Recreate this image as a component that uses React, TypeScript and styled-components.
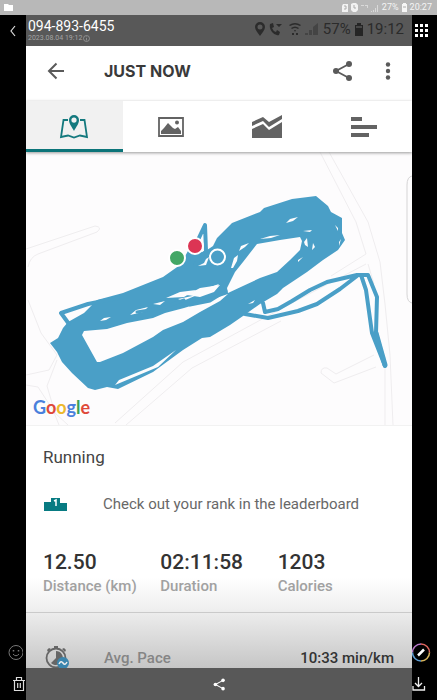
import React from "react";
import styled, { createGlobalStyle } from "styled-components";

const Global = createGlobalStyle`
  * { box-sizing: border-box; }
  body { margin: 0; background: #000; font-family: Roboto, "Liberation Sans", sans-serif; }
  button { font: inherit; color: inherit; }
  svg { display: block; flex: none; }
`;

const Page = styled.div`
  height: 100vh;
  display: flex;
  flex-direction: column;
  overflow: hidden;
  background: #000;
`;

const DeviceBar = styled.header`
  height: 15px;
  flex: none;
  display: flex;
  align-items: center;
  justify-content: space-between;
  padding: 0 5px 0 4px;
  background: #b8b8b8;
  color: #f4f4f4;
  font-size: 9px;
  line-height: 15px;
`;

const DeviceStatus = styled.div`
  display: flex;
  align-items: center;
  gap: 3px;
`;

const Viewer = styled.div`
  flex: 1;
  min-height: 0;
  display: grid;
  grid-template-columns: 26px minmax(0, 1fr) 25px;
`;

const Rail = styled.div<{ $align: string }>`
  display: flex;
  flex-direction: column;
  align-items: ${(p) => p.$align};
  padding: 9px 0 8px;
  color: #ddd;
`;

const IconButton = styled.button<{ $gap?: number }>`
  display: flex;
  flex: none;
  padding: 0;
  border: 0;
  background: none;
  margin-top: ${(p) => p.$gap ?? 0}px;
`;

const TrashButton = styled(IconButton)`
  align-self: flex-end;
`;

const Spacer = styled.div`
  flex: 1;
`;

const Photo = styled.main`
  display: flex;
  flex-direction: column;
  min-height: 0;
  background: #fff;
`;

const PhotoHeader = styled.div`
  height: 31px;
  flex: none;
  display: flex;
  justify-content: space-between;
  padding: 3px 8px 0 2px;
  background: #585858;
`;

const PhotoTitle = styled.div`
  color: #fff;
  font-size: 14px;
  line-height: 16px;
`;

const PhotoDate = styled.div`
  display: flex;
  align-items: center;
  gap: 1px;
  color: #a4a4a4;
  font-size: 7px;
  line-height: 9px;
`;

const PhoneStatus = styled.div`
  height: 22px;
  display: flex;
  align-items: center;
  gap: 4px;
  color: #2b2b2b;
  font-size: 15px;
`;

const PhotoFooter = styled.div`
  height: 32px;
  flex: none;
  display: flex;
  align-items: center;
  justify-content: center;
  background: #585858;
  color: #fff;
`;

const AppScreen = styled.div`
  flex: 1;
  min-height: 0;
  overflow: hidden;
  display: flex;
  flex-direction: column;
  background: #fff;
`;

const AppBar = styled.div`
  height: 55px;
  flex: none;
  display: flex;
  align-items: center;
  padding: 0 21px 6px 21px;
  color: #5a5a5a;
`;

const AppTitle = styled.h1`
  flex: 1;
  margin: 0 0 0 38px;
  font: 700 16px/24px Inter, Roboto, sans-serif;
  color: #3a3a3a;
`;

const BarActions = styled.div`
  display: flex;
  align-items: center;
  gap: 31px;
`;

const Tabs = styled.nav`
  display: grid;
  grid-template-columns: repeat(4, 1fr);
  flex: none;
  height: 51px;
  position: relative;
  z-index: 1;
  box-shadow: 0 1px 3px #999;
`;

const Tab = styled.button<{ $active?: boolean }>`
  display: flex;
  align-items: center;
  justify-content: center;
  padding: 3px 0 0;
  border: 0;
  border-bottom: 3px solid ${(p) => (p.$active ? "#0b7479" : "#fff")};
  background: ${(p) => (p.$active ? "#f1f1f1" : "#fff")};
  color: ${(p) => (p.$active ? "#14797e" : "#636363")};
`;

const MapSvg = styled.svg`
  width: 100%;
  height: auto;
  background: #fdfcfd;
`;

const MapArea = styled.section`
  position: relative;
  flex: none;
  border-bottom: 1px solid #f2f2f2;
`;

const Google = styled.div`
  position: absolute;
  left: 7px;
  bottom: 6px;
  font: 700 18px/24px Lato, sans-serif;
  color: #4a80dc;
`;

const Letter = styled.span<{ $color: string }>`
  color: ${(p) => p.$color};
`;

const Details = styled.section`
  flex: 1 0 auto;
  padding: 18px 17px 0;
  background: linear-gradient(#fff 0 152px, #efefef 183px, #c3c3c3 246px);
`;

const Sport = styled.h2`
  margin: 0;
  font-weight: 400;
  font-size: 17px;
  line-height: 26px;
  color: #444;
`;

const RankLink = styled.a`
  display: flex;
  align-items: center;
  height: 24px;
  margin-top: 22px;
  gap: 36px;
  padding-left: 1px;
  font-size: 15px;
  color: #686868;
  text-decoration: none;
  white-space: nowrap;
`;

const Stats = styled.dl`
  display: grid;
  grid-template-columns: repeat(3, 1fr);
  margin: 32px 0 0;
`;

const Stat = styled.div`
  display: flex;
  flex-direction: column-reverse;
  justify-content: flex-end;
`;

const Value = styled.dd`
  margin: 0;
  font-weight: 500;
  font-size: 21px;
  line-height: 28px;
  color: #333;
`;

const Label = styled.dt`
  font-weight: 500;
  font-size: 15px;
  line-height: 20px;
  color: #a1a1a1;
  white-space: nowrap;
`;

const PaceRow = styled.div`
  display: flex;
  align-items: center;
  height: 56px;
  margin: 16px -17px 0;
  padding: 34px 18px 0 19px;
  border-top: 1px solid #cacaca;
  font-weight: 500;
  font-size: 15px;
  color: #333;
`;

const PaceName = styled.span`
  flex: 1;
  margin-left: 33px;
  color: #858585;
`;

const Share = ({ size }: { size: number }) => (
  <svg width={size} height={size} viewBox="0 0 22 22" fill="currentColor">
    <path d="M17 4 4 11l13 7" fill="none" stroke="currentColor" strokeWidth="1.8" />
    <circle cx="17" cy="4" r="3" /><circle cx="4" cy="11" r="3" /><circle cx="17" cy="18" r="3" />
  </svg>
);

const RouteMap = () => (
  <MapSvg viewBox="26 152 386 273" role="img" aria-label="Running route">
    <g fill="none" stroke="#efedef" strokeWidth="1">
      <path d="M26 249 95 226q8 1 2 6L38 254q-8 3-10 13M320 152l36 70 10 32-35 22M329 152l39 70 12 40 5 42 5 51 3 70M385 357v68M366 264l-76 40-107 58-68 61M368 264l6 20M281 321l-89 47-66 57" />
      <path d="M374 355l-38 19-9-6q-6-1-6 5l13 10 42-16M28 300l13 33 16 22-8 15-23 5M26 385l12 2 15 23 6 15M57 360l-10 26 8 27 13 12" />
      <path stroke="#d5d4d5" d="M412 176q-5 1-5 9v109q0 8 5 9" />
    </g>
    <path
      fill="#4a9fc7"
      d="M50 343 L58 338 L63 328 L68 322 L84 313 L97 300 L123 293 L143 285 L163 277 L180 265 L188 251 L204 252 L213 246 L217 238 L232 223 L260 212 L264 208 L292 199 L316 196 L328 206 L331 212 L342 218 L342 233 L345 240 L338 250 L323 260 L307 272 L283 288 L277 294 L260 304 L243 316 L230 325 L210 337 L202 338 L183 350 L153 372 L118 389 L107 387 L95 390 L88 388 L72 373 L62 362 L57 352Z"
    />
    <g fill="#fdfcfd">
      <path d="M82 335 L84 331 L107 329 L127 323 L153 318 L165 313 L184 308 L197 304 L216 298 L228 294 L220 301 L200 312 L183 322 L163 330 L153 337 L123 353 L100 362 L97 362Z" />
      <path d="M257 244 L280 240 L300 237 L302 241 L300 250 L290 260 L277 272 L260 278 L243 286 L228 293 L227 288 L235 272 L243 262Z" />
      <path d="M166 298l14-6 16-2-12 7zM187 295l13-7 20-3-6 7-14 5zM130 315l6-5 12-3-5 5zM153 304l12-3-5 4zM178 299l19-4-14 6zM100 321l4-3 7-1-5 3zM115 385l4-5 34-14 23-16-18 17z" />
      <path d="M198 266l6-3 2-4 3-2-3 8zM210 287l9-3-4 5-6 3zM239 251l2-5 8-3-4 4zM231 268l3-10 4-3-1 6-4 7zM260 239l10-3 10-1-9 3zM286 223l4-4 8-2-5 4zM303 231l9-1-2 2zM335 225l3 3v3zM304 242l3-4 1 9-3-2zM313 243l2 4-3 3zM339 242l2-3-2 7zM298 260l5-3-5 5zM248 304l7-4-2 3z" />
    </g>
    <g fill="none" stroke="#4a9fc7" strokeWidth="4" strokeLinejoin="round" strokeLinecap="round">
      <path d="M69 324l-8-11 27-9 30-6M189 259l16-34 1 26-11 14M245 314l23 4 30-7 19-7 23-15 17-13M263 303l2 9 13-3 14-8 18-11 17-8 30-7 11 0 9 22-1 36 9 33-13-33-6-43-5-15" />
      <path d="M376 333l9 32" strokeWidth="5" />
      <path d="M226 291l-16 10-20 4M137 312l25-4 22-8" strokeWidth="3" />
    </g>
    <g stroke="#fff" strokeWidth="2">
      <circle cx="177" cy="258" r="8" fill="#43a766" />
      <circle cx="195" cy="246" r="8" fill="#dc3554" />
      <circle cx="217.500" cy="257" r="7.500" fill="#4a9fc7" />
    </g>
  </MapSvg>
);

const stats = [
  ["12.50", "Distance (km)"],
  ["02:11:58", "Duration"],
  ["1203", "Calories"],
];

export default function App() {
  return (
    <>
      <Global />
      <Page>
        <DeviceBar>
          <svg width="9" height="9" viewBox="0 0 9 9"><path fill="#fff" d="M0 1h4l1 1h4v6H0z" /></svg>
          <DeviceStatus>
            <svg width="16" height="9" viewBox="0 0 16 9" fill="#f2f2f2">
              <path d="M1 1h5v8H0V3zM9 1l2-1h3l2 2v5l-2 2h-3L9 7z" />
              <path d="M2 3h2v3H2M12 2v3h2" fill="none" stroke="#aaa" />
            </svg>
            <svg width="18" height="8" viewBox="0 0 18 8" fill="#d9d9d9">
              <path d="M0 1h3v1H0zM4 1h3v3H6V2H4zM10 7h1v1h-1zM12 6h1v2h-1zM14 4h1v4h-1zM16 1h1v7h-1z" />
            </svg>
            <span>27%</span>
            <svg width="5" height="9" viewBox="0 0 5 9"><path fill="#f6f6f6" d="M1 0h3v1h1v8H0V1h1z" /><path stroke="#aaa" d="M1 4h3" /></svg>
            <span>20:27</span>
          </DeviceStatus>
        </DeviceBar>
        <Viewer>
          <Rail $align="center">
            <IconButton aria-label="Back">
              <svg width="8" height="14" viewBox="0 0 8 14"><path d="M6 2 2 7l4 5" fill="none" stroke="#ddd" strokeWidth="1.200" /></svg>
            </IconButton>
            <Spacer />
            <IconButton aria-label="Reactions">
              <svg width="19" height="17" viewBox="0 0 19 17" fill="none" stroke="#777">
                <circle cx="12" cy="8.500" r="7" /><path d="M9 10q3 3.500 6 0" /><path d="M9.500 6v1.500M14.500 6v1.500" strokeWidth="1.500" />
              </svg>
            </IconButton>
            <TrashButton aria-label="Delete" $gap={15}>
              <svg width="14" height="16" viewBox="0 0 14 16" fill="none" stroke="#ddd" strokeWidth="1.200">
                <path d="M1 4.500h12M4.500 4V1.500h5V4M2.500 5v9.500h9V5M5.700 7v5M8.300 7v5" />
              </svg>
            </TrashButton>
          </Rail>
          <Photo>
            <PhotoHeader>
              <div>
                <PhotoTitle>094-893-6455</PhotoTitle>
                <PhotoDate>
                  2023.08.04 19:12
                  <svg width="7" height="7" viewBox="0 0 7 7" fill="none" stroke="#a4a4a4" strokeWidth=".7"><circle cx="3.500" cy="3.500" r="3" /><path d="M3.500 3v2.500M3.500 1.500v.7" /></svg>
                </PhotoDate>
              </div>
              <PhoneStatus>
                <svg width="64" height="14" viewBox="0 0 64 14" fill="#2b2b2b">
                  <path fillRule="evenodd" d="M5 0a5 5 0 0 1 5 5c0 3-3 6-5 9C3 11 0 8 0 5a5 5 0 0 1 5-5m0 2.500a2.200 2.200 0 1 0 0 5 2.200 2.200 0 0 0 0-5" />
                  <path d="M15 2l3-1 1 4-2 1q1 3 4 4l1-2 3 2-1 3q-4 1-7-3t-2-8M21 2h6l-3 3z" />
                  <path d="M34 3q6-4 12 0l-1 1q-5-3-10 0zM36 6q4-3 8 0l-1 1q-3-2-6 0zM39 8h2l-1 2zM37 11h2v2h-2zM41 11h2v2h-2z" />
                  <path d="M50 11h3v2h-3zM54 8h3v5h-3zM58 5l5-4v12h-5z" fill="#444" />
                </svg>
                <span>57%</span>
                <svg width="8" height="13" viewBox="0 0 8 13"><path d="M2 0h4v2h2v11H0V2h2z" fill="#252525" /><path d="M1 3h6v2H1z" fill="#484848" /></svg>
                <span>19:12</span>
              </PhoneStatus>
            </PhotoHeader>
            <AppScreen>
              <AppBar>
                <IconButton aria-label="Go back">
                  <svg width="19" height="18" viewBox="0 0 19 18" fill="none" stroke="currentColor" strokeWidth="2"><path d="M17 9H2M9.500 1.500 2 9l7.500 7.500" /></svg>
                </IconButton>
                <AppTitle>JUST NOW</AppTitle>
                <BarActions>
                  <IconButton aria-label="Share activity"><Share size={22} /></IconButton>
                  <IconButton aria-label="More options">
                    <svg width="6" height="20" viewBox="0 0 6 20" fill="currentColor"><circle cx="3" cy="3.500" r="2.200" /><circle cx="3" cy="10" r="2.200" /><circle cx="3" cy="16.500" r="2.200" /></svg>
                  </IconButton>
                </BarActions>
              </AppBar>
              <Tabs>
                <Tab $active aria-label="Map">
                  <svg width="30" height="25" viewBox="0 0 30 25">
                    <path d="M9 6H4.500L2 23l7-1.500 6 2 6-2 7 1.500L25.500 6H21" fill="none" stroke="currentColor" strokeWidth="1.800" />
                    <path fill="currentColor" fillRule="evenodd" d="M15 1a5 5 0 0 1 5 5c0 4-3 7-5 11-2-4-5-7-5-11a5 5 0 0 1 5-5m0 2.500a2.600 2.600 0 1 0 0 5.200 2.600 2.600 0 0 0 0-5.200" />
                  </svg>
                </Tab>
                <Tab aria-label="Photos">
                  <svg width="26" height="20" viewBox="0 0 26 20">
                    <path d="M1 1h24v18H1z" fill="none" stroke="currentColor" strokeWidth="1.800" />
                    <path d="M3 17v-3l3-3 4-5 5 5 2 1 3-2 3 4v3z" fill="currentColor" /><circle cx="19" cy="5.500" r="2" fill="currentColor" />
                  </svg>
                </Tab>
                <Tab aria-label="Charts">
                  <svg width="30" height="25" viewBox="0 0 30 25" fill="currentColor">
                    <path d="M0 8l11-5 6 5L30 1v4L17 13l-6-6L0 12zM0 15l11-5 6 6L30 8v16H0z" />
                  </svg>
                </Tab>
                <Tab aria-label="Splits">
                  <svg width="26" height="20" viewBox="0 0 26 20" fill="currentColor"><path d="M0 0h11v4H0zM0 8h26v4H0zM0 16h18v4H0z" /></svg>
                </Tab>
              </Tabs>
              <MapArea>
                <RouteMap />
                <Google aria-label="Google">
                  G<Letter $color="#df493b">o</Letter><Letter $color="#edb92d">o</Letter>g<Letter $color="#3b9f57">l</Letter><Letter $color="#df493b">e</Letter>
                </Google>
              </MapArea>
              <Details>
                <Sport>Running</Sport>
                <RankLink href="#leaderboard">
                  <svg width="23" height="13" viewBox="0 0 23 13"><path fill="#087b82" d="M0 4h7V0h9v5h7v8H0z" /><path d="M10 3l2-1v6" fill="none" stroke="#fff" strokeWidth="1.500" /></svg>
                  Check out your rank in the leaderboard
                </RankLink>
                <Stats>
                  {stats.map(([value, label]) => (
                    <Stat key={label}><Label>{label}</Label><Value>{value}</Value></Stat>
                  ))}
                </Stats>
                <PaceRow>
                  <svg width="26" height="25" viewBox="0 0 26 25">
                    <circle cx="11" cy="13" r="9.500" fill="none" stroke="#666" strokeWidth="1.800" />
                    <path d="M9 1h4v2H9zM2 5l2-2 2 1-3 3zM17 4l2-1 2 2-1 2zM11 6a7 7 0 1 1-5 12l5-5z" fill="#666" />
                    <circle cx="18" cy="18" r="6" fill="#3b85ad" /><path d="M14 19q2-4 4-1t4-1" fill="none" stroke="#eee" strokeWidth="1.500" />
                  </svg>
                  <PaceName>Avg. Pace</PaceName>
                  <span>10:33 min/km</span>
                </PaceRow>
              </Details>
            </AppScreen>
            <PhotoFooter>
              <IconButton aria-label="Share photo"><Share size={13} /></IconButton>
            </PhotoFooter>
          </Photo>
          <Rail $align="flex-start">
            <IconButton aria-label="Gallery grid">
              <svg width="17" height="14" viewBox="0 0 17 14" fill="#fff"><path d="M3 0h3v3H3zM8 0h3v3H8zM13 0h3v3h-3zM3 5h3v3H3zM8 5h3v3H8zM13 5h3v3h-3zM3 10h3v3H3zM8 10h3v3H8zM13 10h3v3h-3z" /></svg>
            </IconButton>
            <Spacer />
            <IconButton aria-label="Edit">
              <svg width="19" height="19" viewBox="0 0 19 19" fill="none" strokeWidth="1.500">
                <path d="M.5 9.500a8.500 8.500 0 0 1 8.500-8.500" stroke="#b778c8" /><path d="M9 1a8.500 8.500 0 0 1 8.500 8.500" stroke="#df665e" />
                <path d="M17.500 9.500A8.500 8.500 0 0 1 9 18" stroke="#d6b45c" /><path d="M9 18A8.500 8.500 0 0 1 .5 9.500" stroke="#5b9bd0" />
                <path d="M6 12.500l6-6" stroke="#fff" strokeWidth="2.500" />
              </svg>
            </IconButton>
            <IconButton aria-label="Download" $gap={14}>
              <svg width="14" height="16" viewBox="0 0 14 16" fill="none" stroke="#eee" strokeWidth="1.300"><path d="M6.500 1v9M3 7l3.500 3.500L10 7M1 10v4h11.500v-4" /></svg>
            </IconButton>
          </Rail>
        </Viewer>
      </Page>
    </>
  );
}
